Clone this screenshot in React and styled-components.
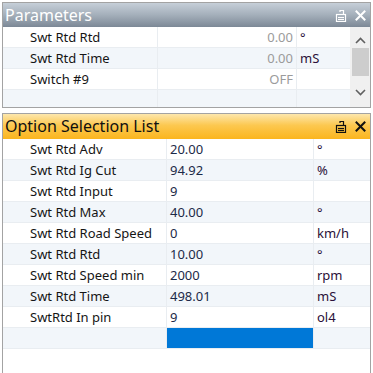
import React from "react";
import styled, { createGlobalStyle } from "styled-components";

const Global = createGlobalStyle`
  html, body { margin: 0; padding: 0; background: #ffffff; }
  body { font-family: "Segoe UI", "Noto Sans", "Open Sans", sans-serif; }
  * { box-sizing: border-box; }
`;

const Page = styled.div`
  width: 373px;
  height: 373px;
  overflow: hidden;
  padding: 2px 2px 0 2px;
  display: flex;
  flex-direction: column;
  gap: 5px;
`;

const Panel = styled.div`
  border: 1px solid #a3a3a3;
  border-bottom-width: ${(p) => (p.$open ? 0 : 1)}px;
  display: flex;
  flex-direction: column;
  height: ${(p) => p.$h}px;
  overflow: hidden;
  flex: ${(p) => (p.$grow ? "1 1 auto" : "0 0 auto")};
  background: #fff;
`;

const TitleBar = styled.div`
  height: ${(p) => p.$h}px;
  flex: 0 0 auto;
  display: flex;
  align-items: center;
  padding: 0 4px 0 2px;
  background: ${(p) =>
    p.$active
      ? "linear-gradient(to bottom, #fde7ad 0%, #fcc850 45%, #fbb51e 100%)"
      : "linear-gradient(to bottom, #c6cfd8 0%, #a4afba 50%, #7c8896 100%)"};
  color: ${(p) => (p.$active ? "#101010" : "#ffffff")};
  font-size: 16px;
`;

const TitleText = styled.span`
  flex: 1;
  line-height: 1;
  padding-bottom: 1px;
`;

const Icons = styled.div`
  display: flex;
  align-items: center;
  gap: 8px;
`;

const Body = styled.div`
  flex: 1;
  display: flex;
  min-height: 0;
`;

const Grid = styled.div`
  flex: 1;
  display: flex;
  flex-direction: column;
`;

const Row = styled.div`
  display: grid;
  grid-template-columns: ${(p) => p.$cols};
  height: 21px;
  flex: 0 0 21px;
  background: ${(p) => (p.$alt ? "#f2f6fa" : "#ffffff")};
  border-bottom: 1px solid #e9edf1;
  font-size: 13px;
`;

const Cell = styled.div`
  display: flex;
  align-items: center;
  padding: ${(p) => p.$pad || "0 3px"};
  justify-content: ${(p) => (p.$right ? "flex-end" : "flex-start")};
  color: ${(p) => p.$color || "#151515"};
  border-right: ${(p) => (p.$noBorder ? "none" : "1px solid #e9edf1")};
  background: ${(p) => p.$bg || "transparent"};
  white-space: nowrap;
  overflow: hidden;
`;

const ScrollBar = styled.div`
  width: 20px;
  flex: 0 0 20px;
  background: #f0f0f0;
  display: flex;
  flex-direction: column;
  align-items: center;
  padding-top: 6px;
`;

const Arrow = styled.div`
  height: 14px;
  display: flex;
  align-items: center;
  justify-content: center;
`;

const Thumb = styled.div`
  width: 17px;
  height: 28px;
  background: #cdcdcd;
  margin-top: 1px;
`;

const Spacer = styled.div`
  flex: 1;
`;

const PinIcon = ({ color }) => (
  <svg width="12" height="13" viewBox="0 0 12 13">
    <g fill="none" stroke={color} strokeWidth="1.2">
      <rect x="1.5" y="5.5" width="9" height="7" />
      <line x1="3" y1="8.5" x2="9" y2="8.5" />
      <line x1="3" y1="10.5" x2="9" y2="10.5" />
      <polyline points="8.5,5.5 8.5,1.5 5,1.5 5,3" />
    </g>
  </svg>
);

const CloseIcon = ({ color }) => (
  <svg width="11" height="11" viewBox="0 0 11 11">
    <g stroke={color} strokeWidth="2" strokeLinecap="square">
      <line x1="1.5" y1="1.5" x2="9.5" y2="9.5" />
      <line x1="9.5" y1="1.5" x2="1.5" y2="9.5" />
    </g>
  </svg>
);

const Chevron = ({ up }) => (
  <svg width="11" height="7" viewBox="0 0 11 7">
    <polyline
      points={up ? "1,6 5.5,1.5 10,6" : "1,1 5.5,5.5 10,1"}
      fill="none"
      stroke="#606060"
      strokeWidth="1.6"
    />
  </svg>
);

const topRows = [
  { label: "Swt Rtd Rtd", value: "0.00", unit: "°" },
  { label: "Swt Rtd Time", value: "0.00", unit: "mS" },
  { label: "Switch #9", value: "OFF", unit: "" },
  { label: "", value: "", unit: "" },
];

const optRows = [
  { label: "Swt Rtd Adv", value: "20.00", unit: "°" },
  { label: "Swt Rtd Ig Cut", value: "94.92", unit: "%" },
  { label: "Swt Rtd Input", value: "9", unit: "" },
  { label: "Swt Rtd Max", value: "40.00", unit: "°" },
  { label: "Swt Rtd Road Speed", value: "0", unit: "km/h" },
  { label: "Swt Rtd Rtd", value: "10.00", unit: "°" },
  { label: "Swt Rtd Speed min", value: "2000", unit: "rpm" },
  { label: "Swt Rtd Time", value: "498.01", unit: "mS" },
  { label: "SwtRtd In pin", value: "9", unit: "ol4" },
  { label: "", value: "", unit: "", selected: true },
];

export default function App() {
  return (
    <>
      <Global />
      <Page>
        <Panel $h={106}>
          <TitleBar $h={24}>
            <TitleText>Parameters</TitleText>
            <Icons>
              <PinIcon color="#ffffff" />
              <CloseIcon color="#ffffff" />
            </Icons>
          </TitleBar>
          <Body>
            <Grid>
              {topRows.map((r, i) => (
                <Row key={i} $alt={i % 2 === 1} $cols="155px 139px 1fr">
                  <Cell $pad="0 0 0 27px">{r.label}</Cell>
                  <Cell $right $color="#9b9b9b">{r.value}</Cell>
                  <Cell $color="#2a1038" $noBorder>{r.unit}</Cell>
                </Row>
              ))}
            </Grid>
            <ScrollBar>
              <Arrow><Chevron up /></Arrow>
              <Thumb />
              <Spacer />
              <Arrow style={{ marginBottom: 8 }}><Chevron /></Arrow>
            </ScrollBar>
          </Body>
        </Panel>
        <Panel $grow $open>
          <TitleBar $h={25} $active>
            <TitleText>Option Selection List</TitleText>
            <Icons>
              <PinIcon color="#111111" />
              <CloseIcon color="#111111" />
            </Icons>
          </TitleBar>
          <Grid>
            {optRows.map((r, i) => (
              <Row key={i} $alt={i % 2 === 1} $cols="164px 147px 1fr">
                <Cell $pad="0 0 0 27px">{r.label}</Cell>
                <Cell $color="#1c2a48" $bg={r.selected ? "#0078d7" : undefined}>
                  {r.value}
                </Cell>
                <Cell $color="#2a1038" $noBorder>{r.unit}</Cell>
              </Row>
            ))}
          </Grid>
        </Panel>
      </Page>
    </>
  );
}
